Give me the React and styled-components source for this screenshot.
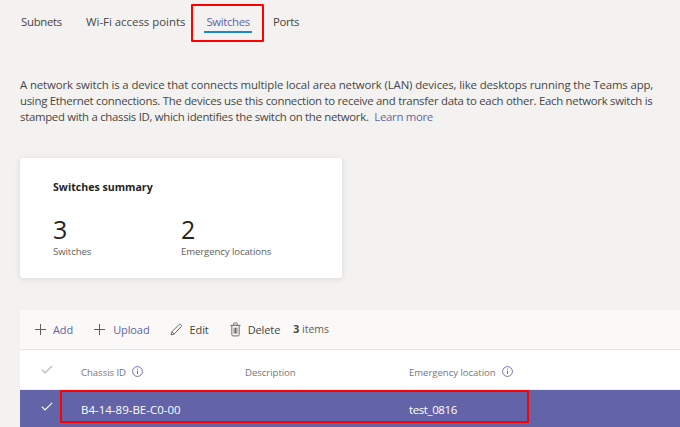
import React from "react";
import styled, { createGlobalStyle } from "styled-components";

const Global = createGlobalStyle`
  html, body { margin: 0; padding: 0; background: #f3f2f1; }
  body { font-family: "Open Sans", "Noto Sans", "Liberation Sans", sans-serif; color: #252423; }
`;
const Page = styled.div`
  position: relative; width: 680px; height: 427px; overflow: hidden;
  display: flex; flex-direction: column; background: #f3f2f1;
`;
const Tabs = styled.nav`
  display: flex; height: 42px; padding: 0 0 0 21px; box-sizing: border-box; align-items: flex-start;
`;
const Tab = styled.div`
  position: relative; font-size: 11.4px; line-height: 16px; margin-top: 14px; margin-right: ${p => p.$gap}px; letter-spacing: ${p => p.$track}px;
  color: ${p => p.$active ? "#6264a7" : "#484644"};
  ${p => p.$active && `&::after { content: ""; position: absolute; left: -2px; right: -2px; top: 17px; height: 2px; background: #1b87d6; }`}
`;
const Intro = styled.p`
  margin: 35px 0 0 20px; font-size: 11.4px; line-height: 16px; color: #484644;
`;
const IntroLine = styled.span`
  display: block; white-space: nowrap; letter-spacing: ${p => p.$track}px;
`;
const Link = styled.a` color: #6264a7; margin-left: 3px; `;
const Card = styled.section`
  margin: 33px 0 0 20px; width: 322px; height: 120px; box-sizing: border-box; padding: 21px 33px;
  background: #fff; border-radius: 3px; box-shadow: 0 1px 6px rgba(0,0,0,.1);
`;
const CardTitle = styled.h2`
  margin: 0; font-size: 10.6px; line-height: 16px; font-weight: 700; color: #252423;
`;
const Stats = styled.div` display: grid; grid-template-columns: 128px 1fr; margin-top: 19px; `;
const Stat = styled.div` display: flex; flex-direction: column; `;
const StatValue = styled.div` font-size: 25px; line-height: 30px; color: #252423; font-weight: 400; `;
const StatLabel = styled.div` font-size: 9.6px; line-height: 14px; margin-top: 1px; color: #605e5c; letter-spacing: -0.1px; `;
const Table = styled.section` margin: 32px 0 0 20px; display: flex; flex-direction: column; `;
const Toolbar = styled.div`
  height: 40px; box-sizing: border-box; display: flex; align-items: center; padding-left: 15px;
  background: #faf9f8; border-bottom: 1px solid #e6e4e2; font-size: 11px;
`;
const Action = styled.div`
  display: flex; align-items: center; gap: ${p => p.$iconGap}px; margin-right: ${p => p.$gap}px; letter-spacing: -0.1px;
  color: ${p => p.$accent ? "#6264a7" : "#484644"};
  svg { display: block; }
`;
const Count = styled.div` font-size: 10.5px; color: #605e5c; margin-top: -2px; b { font-weight: 700; color: #484644; } `;
const HeadRow = styled.div`
  height: 40px; background: #fff; display: grid; grid-template-columns: 61px 164px 164px 1fr; align-items: center;
  font-size: 9.6px; color: #797775; letter-spacing: -0.05px; border-bottom: 1px solid #f0efee; box-sizing: border-box;
`;
const DataRow = styled.div`
  height: 37px; background: #6264a7; display: grid; grid-template-columns: 61px 164px 164px 1fr; align-items: center;
  font-size: 11.5px; color: #fff; padding-top: 1px; box-sizing: border-box;
`;
const CheckCell = styled.div` padding-left: 21px; margin-top: ${p => p.$up}px; svg { display: block; } `;
const HeadCell = styled.div` display: flex; align-items: center; gap: 6px; padding-top: 6px; svg { display: block; margin-top: -2px; } `;
const TightCell = styled.div` letter-spacing: -0.4px; `;
const Highlight = styled.div`
  position: absolute; box-sizing: border-box; border: 2px solid #f00; border-radius: 1px;
  left: ${p => p.$x}px; top: ${p => p.$y}px; width: ${p => p.$w}px; height: ${p => p.$h}px; pointer-events: none;
`;

const Plus = ({ c }) => (
  <svg width="11" height="11" viewBox="0 0 11 11"><path d="M5.500 0v11M0 5.500h11" stroke={c} strokeWidth="1" fill="none" /></svg>
);
const Pencil = () => (
  <svg width="13" height="13" viewBox="0 0 14 14" fill="none" stroke="#605e5c" strokeWidth="1" strokeLinejoin="round">
    <path d="M1.2 12.8l.9-3.4 7.4-7.5c.7-.7 1.6-.7 2.3 0s.7 1.6 0 2.3L4.500 11.900z" />
    <path d="M2.100 9.400l2.400 2.500" />
  </svg>
);
const Trash = () => (
  <svg width="11" height="15" viewBox="0 0 12 15" fill="none" stroke="#605e5c" strokeWidth="1">
    <path d="M.5 3h11M2 3v10.200c0 .7.500 1.300 1.200 1.300h5.600c.7 0 1.200-.6 1.200-1.300V3M4 3V1.200C4 .8 4.300.5 4.700.5h2.600c.4 0 .7.300.7.700V3M4.500 5.500v6.500M6 5.500v6.500M7.500 5.500v6.500" />
  </svg>
);
const Info = () => (
  <svg width="11" height="11" viewBox="0 0 11 11" fill="none" stroke="#6264a7">
    <circle cx="5.500" cy="5.500" r="4.900" strokeWidth=".9" />
    <path d="M5.500 4.800v3.200" strokeWidth="1" />
    <path d="M5.500 2.700v1" strokeWidth="1" />
  </svg>
);
const Check = ({ c }) => (
  <svg width="12" height="9" viewBox="0 0 12 9"><path d="M.8 4.600l3.200 3.300L11.200.8" stroke={c} strokeWidth="1.100" fill="none" /></svg>
);

export default function App() {
  return (
    <Page>
      <Global />
      <Tabs>
        <Tab $gap={24} $track={-0.3}>Subnets</Tab>
        <Tab $gap={21} $track={0}>Wi-Fi access points</Tab>
        <Tab $gap={23} $track={-0.35} $active>Switches</Tab>
        <Tab $track={-0.3}>Ports</Tab>
      </Tabs>
      <Intro>
        <IntroLine $track={-0.12}>A network switch is a device that connects multiple local area network (LAN) devices, like desktops running the Teams app,</IntroLine>
        <IntroLine $track={-0.28}>using Ethernet connections. The devices use this connection to receive and transfer data to each other. Each network switch is</IntroLine>
        <IntroLine $track={-0.3}>stamped with a chassis ID, which identifies the switch on the network. <Link>Learn more</Link></IntroLine>
      </Intro>
      <Card>
        <CardTitle>Switches summary</CardTitle>
        <Stats>
          <Stat><StatValue>3</StatValue><StatLabel>Switches</StatLabel></Stat>
          <Stat><StatValue>2</StatValue><StatLabel>Emergency locations</StatLabel></Stat>
        </Stats>
      </Card>
      <Table>
        <Toolbar>
          <Action $accent $iconGap={7} $gap={21}><Plus c="#605e5c" />Add</Action>
          <Action $accent $iconGap={8} $gap={20}><Plus c="#605e5c" />Upload</Action>
          <Action $iconGap={7} $gap={21}><Pencil />Edit</Action>
          <Action $iconGap={7} $gap={13}><Trash />Delete</Action>
          <Count><b>3</b> items</Count>
        </Toolbar>
        <HeadRow>
          <CheckCell $up={0}><Check c="#b3b0ad" /></CheckCell>
          <HeadCell>Chassis ID <Info /></HeadCell>
          <HeadCell>Description</HeadCell>
          <HeadCell>Emergency location <Info /></HeadCell>
        </HeadRow>
        <DataRow>
          <CheckCell $up={-5}><Check c="#fff" /></CheckCell>
          <div>B4-14-89-BE-C0-00</div>
          <div />
          <TightCell>test_0816</TightCell>
        </DataRow>
      </Table>
      <Highlight $x={191} $y={4} $w={73} $h={38} />
      <Highlight $x={60} $y={390} $w={469} $h={33} />
    </Page>
  );
}
